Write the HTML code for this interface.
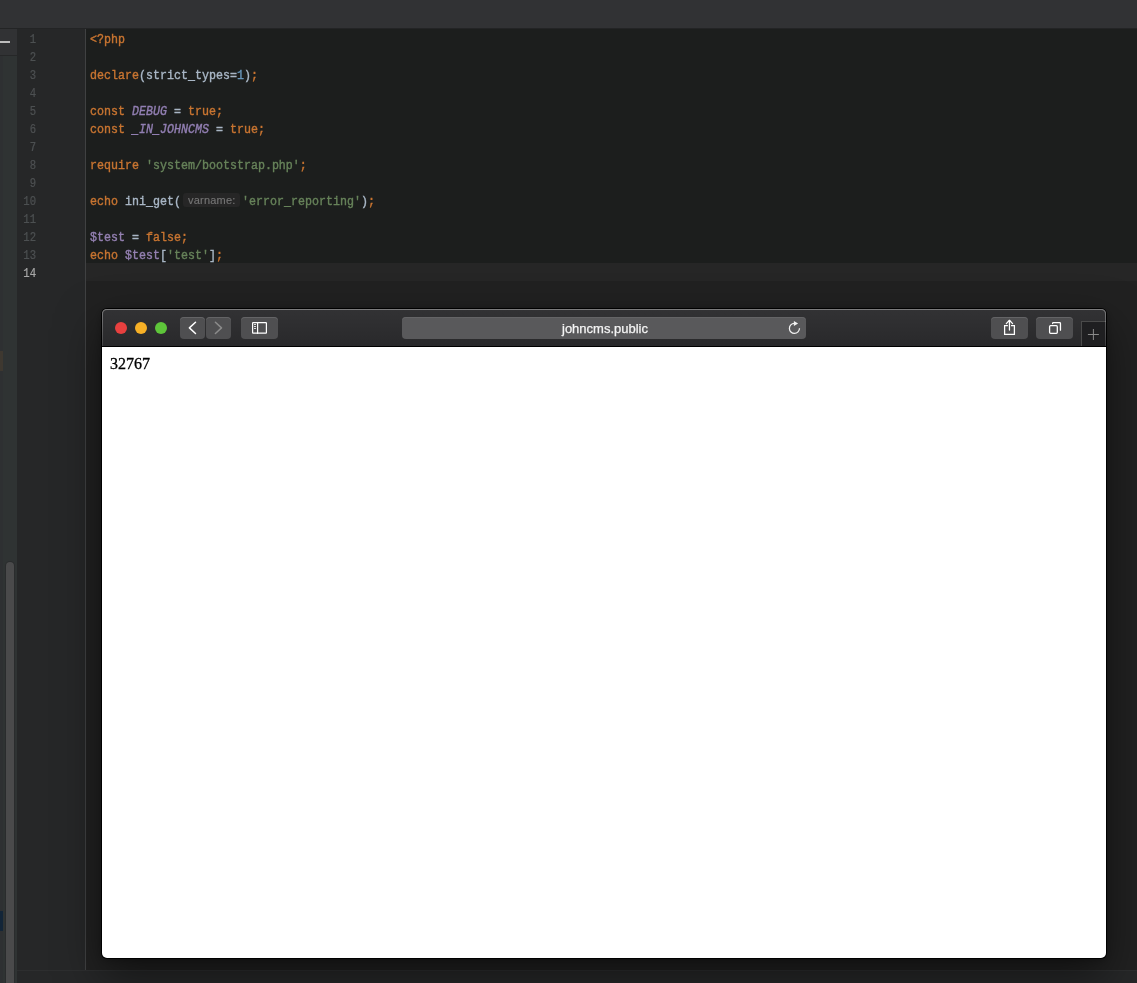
<!DOCTYPE html>
<html><head><meta charset="utf-8">
<style>
html,body{margin:0;padding:0;width:1137px;height:983px;overflow:hidden;background:#1c1e1d;position:relative;}
.a{position:absolute;}
#topbar{left:0;top:0;width:1137px;height:28px;background:#313234;}
#topline{left:0;top:28px;width:1137px;height:1px;background:#232425;}
#lp-head{left:0;top:29px;width:17px;height:26px;background:#313234;}
#lp-dash{left:0;top:41px;width:10px;height:2px;background:#bdbdbd;}
#lp-sep{left:0;top:55px;width:17px;height:1px;background:#262728;}
#lp-body{left:0;top:56px;width:17px;height:927px;background:#2f3333;}
#lp-edge{left:0;top:56px;width:3px;height:927px;background:#2e3032;}
#gutter{left:17px;top:29px;width:68px;height:954px;background:#262728;}
#gsep{left:85px;top:29px;width:1px;height:941px;background:#404142;}
#curline{left:86px;top:263px;width:1051px;height:18px;background:#262626;}
.ln{position:absolute;left:15.7px;transform:translateY(2.4px) scaleY(1.12);transform-origin:0 12px;-webkit-text-stroke:0.2px currentColor;will-change:transform;width:20px;text-align:right;font-family:"Liberation Mono",monospace;font-size:10.6px;color:#4d5052;height:18px;line-height:18px;}
.code{position:absolute;left:90px;transform:translateY(2.25px) scaleY(1.12);transform-origin:0 12px;-webkit-text-stroke:0.35px currentColor;will-change:transform;font-family:"Liberation Mono",monospace;font-size:11.667px;height:18px;line-height:18px;white-space:pre;color:#a9b7c6;}
.k{color:#c97531}.s{color:#67835a}.n{color:#6897bb}.c{color:#927fb3;font-style:italic}.v{color:#9480b2}
#hint{left:183px;top:193px;width:57px;height:14px;border-radius:3px;background:#262626;color:#747474;font-family:"Liberation Sans",sans-serif;font-size:11px;line-height:14px;text-indent:5px;will-change:transform;letter-spacing:0.2px;-webkit-text-stroke:0.15px #747474;}
#status{left:17px;top:971px;width:1120px;height:12px;background:#262728;}
#statusline{left:17px;top:970px;width:1120px;height:1px;background:#2d2e2f;}
#win{left:102px;top:309px;width:1004px;height:649px;border-radius:5px;background:#fff;box-shadow:0 0 0 1px #000,0 18px 45px rgba(0,0,0,.5),0 1px 8px rgba(0,0,0,.3);overflow:hidden;}
#tb{left:0;top:0;width:1004px;height:37px;background:linear-gradient(#323234,#29292b);border-bottom:1px solid #000;}
#tbhl{left:0;top:0;width:1004px;height:37px;box-sizing:border-box;border:1px solid rgba(255,255,255,.36);border-bottom:none;border-radius:5px 5px 0 0;-webkit-mask-image:linear-gradient(#000,rgba(0,0,0,.35));}
.dot{position:absolute;top:13px;width:12px;height:12px;border-radius:50%;}
.btn{position:absolute;top:8px;height:22px;background:#4f4f51;border-radius:4px;box-shadow:inset 0 1px 0 #646466;}
#addr{left:300px;top:8px;width:404px;height:22px;box-sizing:border-box;padding:1px 0 0 2px;-webkit-text-stroke:0.25px #f4f4f4;background:#59595b;border-radius:4px;position:absolute;color:#f4f4f4;box-shadow:inset 0 1px 0 #646466;font-family:"Liberation Sans",sans-serif;font-size:13px;line-height:21px;text-align:center;will-change:transform;}
#newtab{left:979px;top:12px;width:25px;height:25px;background:#1f1f21;border-left:1px solid #4a4a4a;border-top:1px solid #4a4a4a;box-sizing:border-box;}
#content{left:8px;top:46px;font-family:"Liberation Serif",serif;font-size:16px;color:#000;position:absolute;-webkit-text-stroke:0.3px #000;}
</style></head><body>
<div class="a" id="topbar"></div>
<div class="a" id="topline"></div>
<div class="a" id="lp-head"></div>
<div class="a" id="lp-dash"></div>
<div class="a" id="lp-sep"></div>
<div class="a" id="lp-body"></div>
<div class="a" id="lp-edge"></div>
<div class="a" id="gutter"></div>
<div class="a" style="left:0;top:351px;width:3px;height:20px;background:#3e3830"></div>
<div class="a" style="left:0;top:911px;width:3px;height:20px;background:#132538"></div>
<div class="a" style="left:6px;top:562px;width:8px;height:430px;border-radius:4px;background:#4a4a4b;box-shadow:0 0 0 1px #2a2c2d"></div>
<div class="a" id="gsep"></div>
<div class="a" id="curline"></div>
<div class="a" style="left:86px;top:281px;width:1051px;height:689px;background:#212121"></div>
<div class="a" id="status"></div>
<div class="a" id="statusline"></div>

<div class="ln" style="top:29px">1</div>
<div class="ln" style="top:47px">2</div>
<div class="ln" style="top:65px">3</div>
<div class="ln" style="top:83px">4</div>
<div class="ln" style="top:101px">5</div>
<div class="ln" style="top:119px">6</div>
<div class="ln" style="top:137px">7</div>
<div class="ln" style="top:155px">8</div>
<div class="ln" style="top:173px">9</div>
<div class="ln" style="top:191px">10</div>
<div class="ln" style="top:209px">11</div>
<div class="ln" style="top:227px">12</div>
<div class="ln" style="top:245px">13</div>
<div class="ln" style="top:263px;color:#a8a8a8">14</div>

<div class="code" style="top:29px"><span class="k">&lt;?php</span></div>
<div class="code" style="top:65px"><span class="k">declare</span>(strict_types=<span class="n">1</span>)<span class="k">;</span></div>
<div class="code" style="top:101px"><span class="k">const </span><span class="c">DEBUG</span> = <span class="k">true;</span></div>
<div class="code" style="top:119px"><span class="k">const </span><span class="c">_IN_JOHNCMS</span> = <span class="k">true;</span></div>
<div class="code" style="top:155px"><span class="k">require </span><span class="s">'system/bootstrap.php'</span><span class="k">;</span></div>
<div class="code" style="top:191px"><span class="k">echo </span>ini_get(</div>
<div class="a" id="hint">varname:</div>
<div class="code" style="top:191px;left:242px"><span class="s">'error_reporting'</span>)<span class="k">;</span></div>
<div class="code" style="top:227px"><span class="v">$test</span> = <span class="k">false;</span></div>
<div class="code" style="top:245px"><span class="k">echo </span><span class="v">$test</span>[<span class="s">'test'</span>]<span class="k">;</span></div>

<div class="a" id="win">
  <div class="a" id="tb">
    <div class="dot" style="left:13px;background:#e8403f"></div>
    <div class="dot" style="left:33px;background:#f7b026"></div>
    <div class="dot" style="left:53px;background:#5ec53a"></div>
    <div class="btn" style="left:78px;width:25px"></div>
    <div class="btn" style="left:104px;width:25px"></div>
    <div class="btn" style="left:139px;width:37px"></div>
    <div id="addr">johncms.public</div>
    <div class="btn" style="left:889px;width:37px"></div>
    <div class="btn" style="left:934px;width:37px"></div>
    <div class="a" id="newtab"></div>
    <div class="a" id="tbhl"></div>
    <svg class="a" style="left:0;top:0" width="1004" height="38" viewBox="0 0 1004 38" fill="none" stroke-linecap="round" stroke-linejoin="round">
      <path d="M93.5 13.3 L87.4 18.9 L93.5 24.5" stroke="#fff" stroke-width="1.5"/>
      <path d="M113.4 13.3 L119.5 18.9 L113.4 24.5" stroke="#8b8b8b" stroke-width="1.5"/>
      <rect x="150.6" y="13.6" width="13.8" height="10.6" rx="0.5" stroke="#fff" stroke-width="1.2"/>
      <path d="M155.6 13.5 V24.3" stroke="#fff" stroke-width="1.2"/>
      <path d="M152.4 15.5 H153.6 M152.4 17.5 H153.6 M152.4 19.5 H153.6" stroke="#e0e0e0" stroke-width="1"/>
      <path d="M697.5 19.35 A5.05 5.05 0 1 1 692.3 14.3" stroke="#f2f2f2" stroke-width="1.25" stroke-linecap="butt"/>
      <path d="M691.85 12.1 L696.1 14.5 L691.85 16.95 Z" fill="#f2f2f2" stroke="none"/>
      <path d="M905.9 16.55 H902.6 V25.4 H912.4 V16.55 H909.0" stroke="#fff" stroke-width="1.25" stroke-linecap="butt" stroke-linejoin="miter"/>
      <path d="M907.46 21.1 V11.6" stroke="#fff" stroke-width="1.25"/>
      <path d="M904.3 14.6 L907.46 11.3 L910.6 14.6" stroke="#fff" stroke-width="1.25"/>
      <rect x="947.6" y="16.7" width="7.7" height="7.6" rx="1" stroke="#fff" stroke-width="1.3"/>
      <path d="M950.6 14.6 V14.4 Q950.6 13.65 951.4 13.65 H957.7 Q958.45 13.65 958.45 14.4 V21.2" stroke="#fff" stroke-width="1.3"/>
      <path d="M991.4 20 V31 M985.9 25.5 H996.9" stroke="#8a8a8a" stroke-width="1" stroke-linecap="butt"/>
    </svg>
  </div>
  <div id="content">32767</div>
</div>
</body></html>
